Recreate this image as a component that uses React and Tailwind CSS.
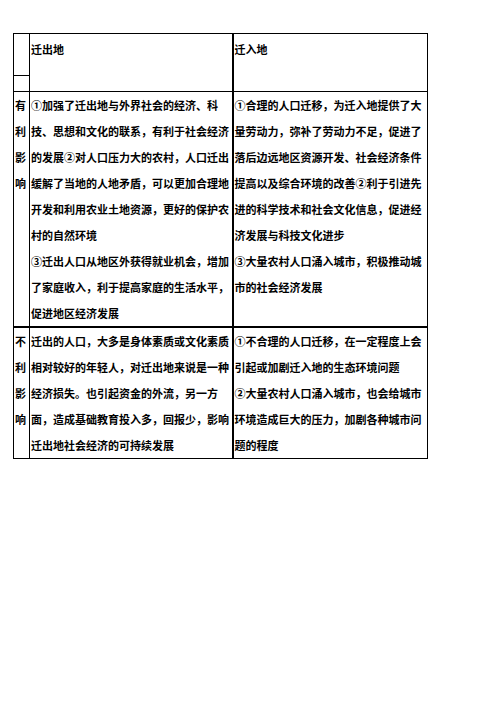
const positives = {
  label: ["有", "利", "影", "响"],
  out: [
    "①加强了迁出地与外界社会的经济、科",
    "技、思想和文化的联系，有利于社会经济",
    "的发展②对人口压力大的农村，人口迁出",
    "缓解了当地的人地矛盾，可以更加合理地",
    "开发和利用农业土地资源，更好的保护农",
    "村的自然环境",
    "③迁出人口从地区外获得就业机会，增加",
    "了家庭收入，利于提高家庭的生活水平，",
    "促进地区经济发展",
  ],
  into: [
    "①合理的人口迁移，为迁入地提供了大",
    "量劳动力，弥补了劳动力不足，促进了",
    "落后边远地区资源开发、社会经济条件",
    "提高以及综合环境的改善②利于引进先",
    "进的科学技术和社会文化信息，促进经",
    "济发展与科技文化进步",
    "③大量农村人口涌入城市，积极推动城",
    "市的社会经济发展",
  ],
};

const negatives = {
  label: ["不", "利", "影", "响"],
  out: [
    "迁出的人口，大多是身体素质或文化素质",
    "相对较好的年轻人，对迁出地来说是一种",
    "经济损失。也引起资金的外流，另一方",
    "面，造成基础教育投入多，回报少，影响",
    "迁出地社会经济的可持续发展",
  ],
  into: [
    "①不合理的人口迁移，在一定程度上会",
    "引起或加剧迁入地的生态环境问题",
    "②大量农村人口涌入城市，也会给城市",
    "环境造成巨大的压力，加剧各种城市问",
    "题的程度",
  ],
};

function Lines({ lines }) {
  return (
    <div className="flex flex-col">
      {lines.map((line, i) => (
        <span key={i} className="block h-[26px] whitespace-nowrap leading-[26px]">
          {line}
        </span>
      ))}
    </div>
  );
}

function ImpactRow({ data, height, thickTop }) {
  return (
    <tr>
      <td
        className={`border border-black ${thickTop ? "border-t-2" : ""} pl-[1px] align-top`}
        style={{ height }}
      >
        <Lines lines={data.label} />
      </td>
      <td className={`border border-black ${thickTop ? "border-t-2" : ""} border-r-2 pl-[1px] align-top`}>
        <Lines lines={data.out} />
      </td>
      <td className={`border border-black ${thickTop ? "border-t-2" : ""} pl-[1px] align-top`}>
        <Lines lines={data.into} />
      </td>
    </tr>
  );
}

export default function App() {
  return (
    <div
      className="h-[702px] w-[496px] bg-white pt-[33px] pl-[13px] text-[11px] font-bold text-black"
      style={{ fontFamily: '"Noto Sans CJK SC", "Noto Sans", sans-serif' }}
    >
      <table className="w-[414px] table-fixed border-collapse">
        <colgroup>
          <col className="w-[16px]" />
          <col className="w-[203px]" />
          <col className="w-[195px]" />
        </colgroup>
        <tbody>
          <tr>
            <td className="h-[42px] border border-black"></td>
            <td rowSpan={2} className="border border-black border-r-2 pl-[1px] pt-[2px] align-top">
              <span className="block leading-[26px]">迁出地</span>
            </td>
            <td rowSpan={2} className="border border-black pl-[1px] pt-[2px] align-top">
              <span className="block leading-[26px]">迁入地</span>
            </td>
          </tr>
          <tr>
            <td className="h-[16px] border border-black"></td>
          </tr>
          <ImpactRow data={positives} height={234} />
          <ImpactRow data={negatives} height={131} thickTop />
        </tbody>
      </table>
    </div>
  );
}
